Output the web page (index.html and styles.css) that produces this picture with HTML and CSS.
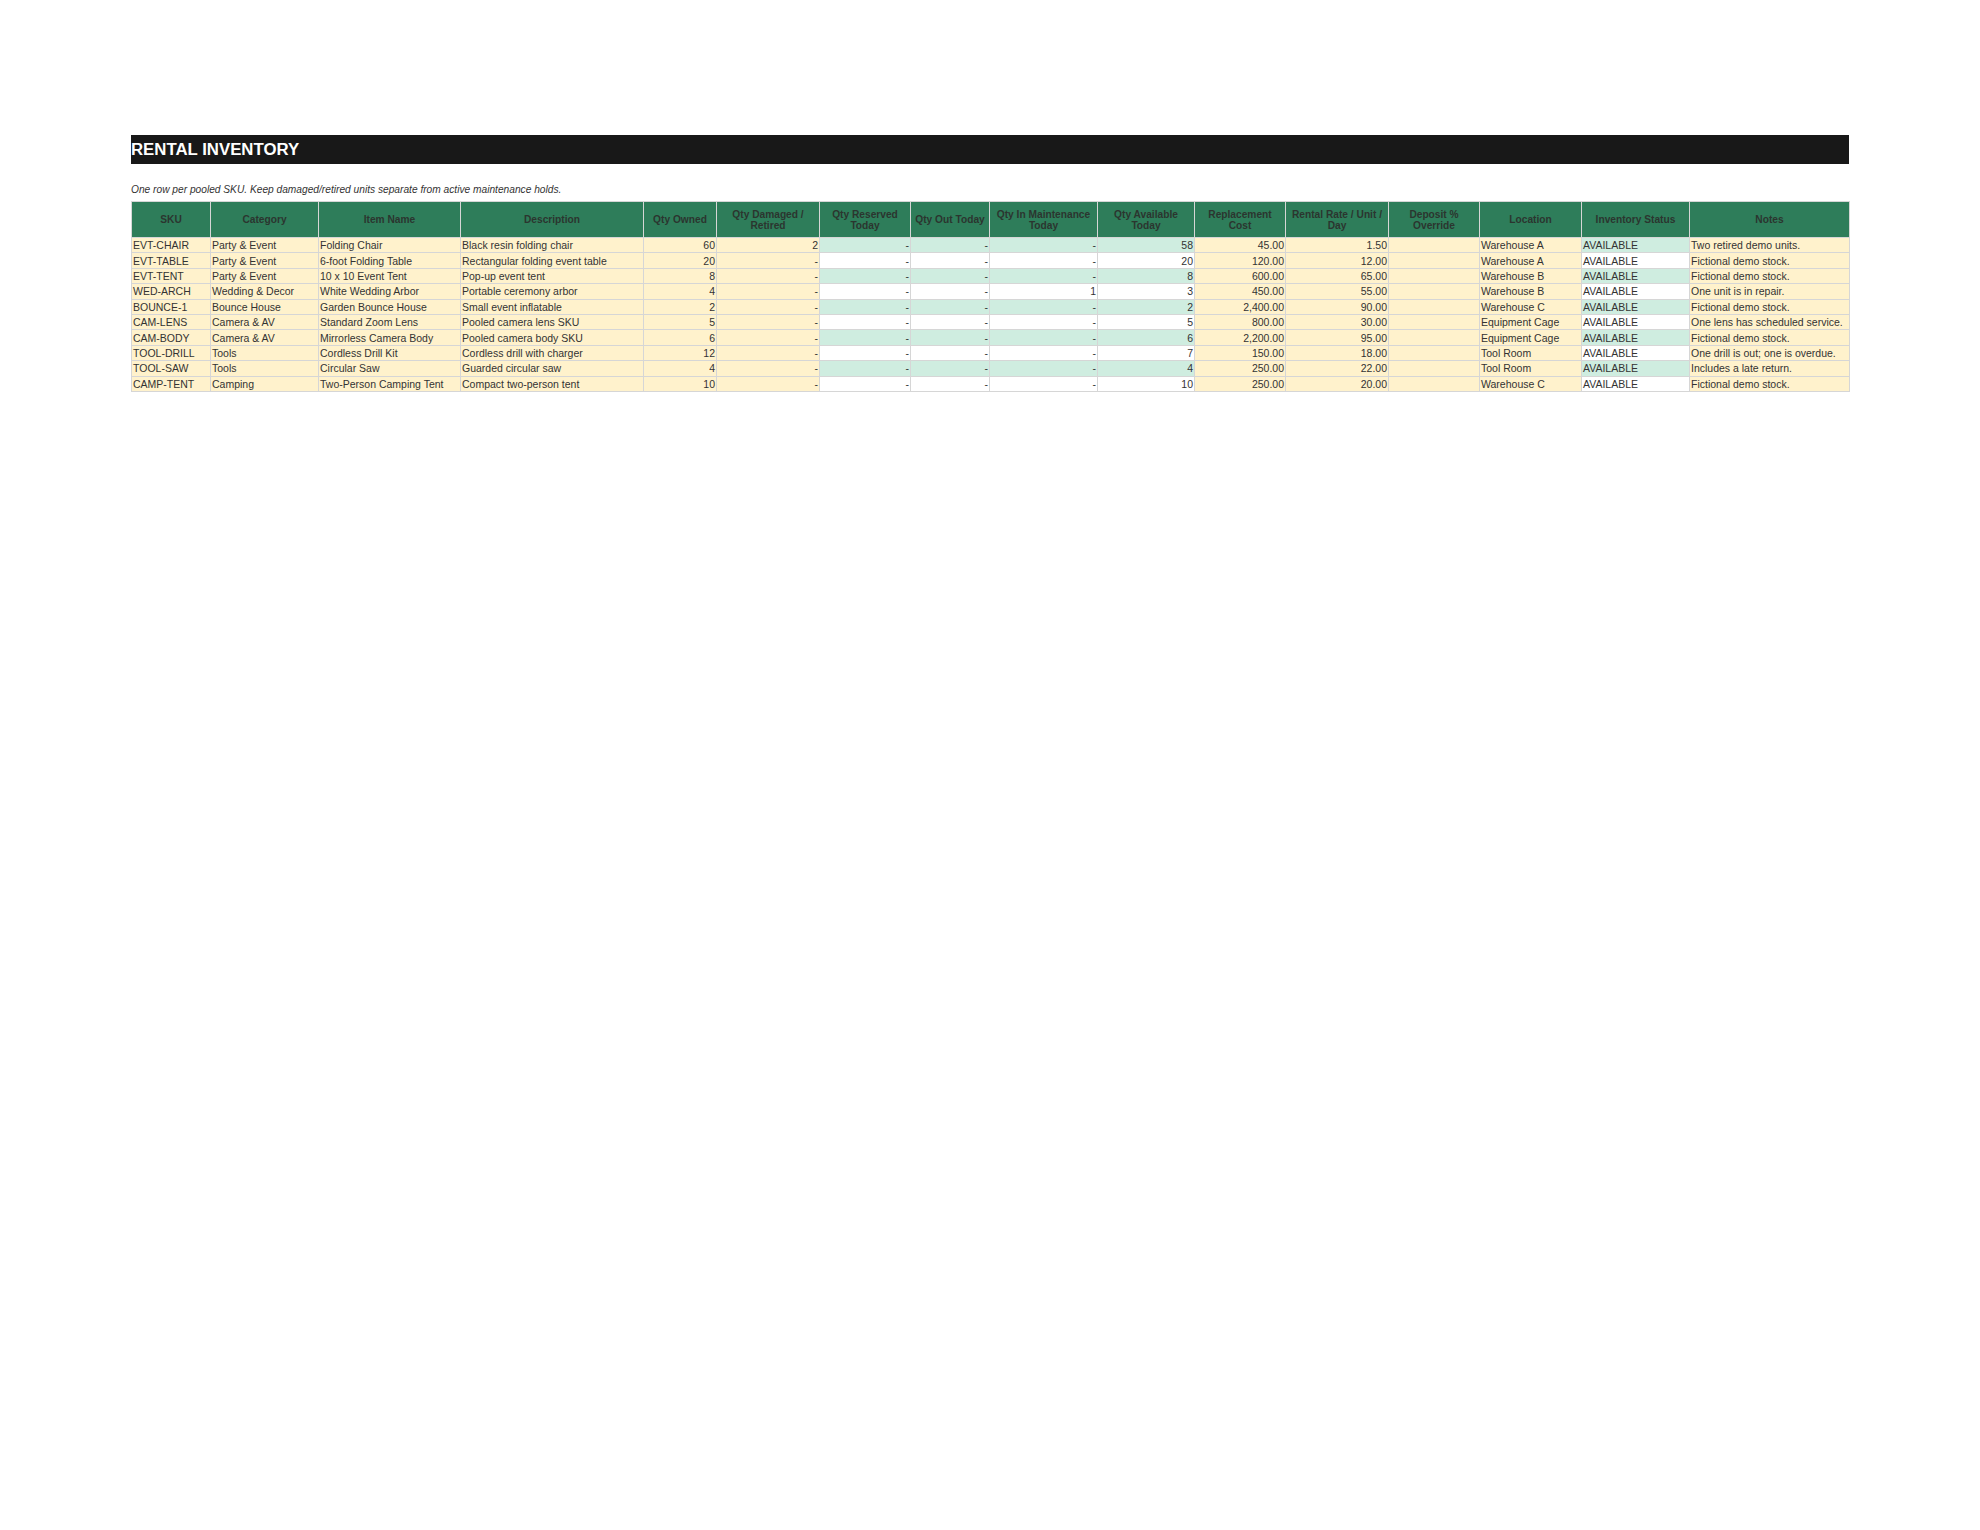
FILE: index.html
```html
<!DOCTYPE html>
<html>
<head>
<meta charset="utf-8">
<link rel="stylesheet" href="styles.css">
</head>
<body>
<div class="sheet">
  <div class="title">RENTAL INVENTORY</div>
  <div class="subtitle">One row per pooled SKU. Keep damaged/retired units separate from active maintenance holds.</div>
  <table class="inv">
    <colgroup>
      <col style="width:79px"><col style="width:108px"><col style="width:142px"><col style="width:183px">
      <col style="width:73px"><col style="width:103px"><col style="width:91px"><col style="width:79px">
      <col style="width:108px"><col style="width:97px"><col style="width:91px"><col style="width:103px">
      <col style="width:91px"><col style="width:102px"><col style="width:108px"><col style="width:160px">
    </colgroup>
    <thead>
      <tr>
        <th>SKU</th><th>Category</th><th>Item Name</th><th>Description</th><th>Qty Owned</th>
        <th>Qty Damaged /<br>Retired</th><th>Qty Reserved<br>Today</th><th>Qty Out Today</th>
        <th>Qty In Maintenance<br>Today</th><th>Qty Available<br>Today</th><th>Replacement<br>Cost</th>
        <th>Rental Rate / Unit /<br>Day</th><th>Deposit %<br>Override</th><th>Location</th>
        <th>Inventory Status</th><th>Notes</th>
      </tr>
    </thead>
    <tbody>
      <tr class="odd"><td class="in">EVT-CHAIR</td><td class="in">Party &amp; Event</td><td class="in">Folding Chair</td><td class="in">Black resin folding chair</td><td class="in num">60</td><td class="in num">2</td><td class="calc num">-</td><td class="calc num">-</td><td class="calc num">-</td><td class="calc num">58</td><td class="in num">45.00</td><td class="in num">1.50</td><td class="in"></td><td class="in">Warehouse A</td><td class="calc">AVAILABLE</td><td class="in">Two retired demo units.</td></tr>
      <tr class="even"><td class="in">EVT-TABLE</td><td class="in">Party &amp; Event</td><td class="in">6-foot Folding Table</td><td class="in">Rectangular folding event table</td><td class="in num">20</td><td class="in num">-</td><td class="calc num">-</td><td class="calc num">-</td><td class="calc num">-</td><td class="calc num">20</td><td class="in num">120.00</td><td class="in num">12.00</td><td class="in"></td><td class="in">Warehouse A</td><td class="calc">AVAILABLE</td><td class="in">Fictional demo stock.</td></tr>
      <tr class="odd"><td class="in">EVT-TENT</td><td class="in">Party &amp; Event</td><td class="in">10 x 10 Event Tent</td><td class="in">Pop-up event tent</td><td class="in num">8</td><td class="in num">-</td><td class="calc num">-</td><td class="calc num">-</td><td class="calc num">-</td><td class="calc num">8</td><td class="in num">600.00</td><td class="in num">65.00</td><td class="in"></td><td class="in">Warehouse B</td><td class="calc">AVAILABLE</td><td class="in">Fictional demo stock.</td></tr>
      <tr class="even"><td class="in">WED-ARCH</td><td class="in">Wedding &amp; Decor</td><td class="in">White Wedding Arbor</td><td class="in">Portable ceremony arbor</td><td class="in num">4</td><td class="in num">-</td><td class="calc num">-</td><td class="calc num">-</td><td class="calc num">1</td><td class="calc num">3</td><td class="in num">450.00</td><td class="in num">55.00</td><td class="in"></td><td class="in">Warehouse B</td><td class="calc">AVAILABLE</td><td class="in">One unit is in repair.</td></tr>
      <tr class="odd"><td class="in">BOUNCE-1</td><td class="in">Bounce House</td><td class="in">Garden Bounce House</td><td class="in">Small event inflatable</td><td class="in num">2</td><td class="in num">-</td><td class="calc num">-</td><td class="calc num">-</td><td class="calc num">-</td><td class="calc num">2</td><td class="in num">2,400.00</td><td class="in num">90.00</td><td class="in"></td><td class="in">Warehouse C</td><td class="calc">AVAILABLE</td><td class="in">Fictional demo stock.</td></tr>
      <tr class="even"><td class="in">CAM-LENS</td><td class="in">Camera &amp; AV</td><td class="in">Standard Zoom Lens</td><td class="in">Pooled camera lens SKU</td><td class="in num">5</td><td class="in num">-</td><td class="calc num">-</td><td class="calc num">-</td><td class="calc num">-</td><td class="calc num">5</td><td class="in num">800.00</td><td class="in num">30.00</td><td class="in"></td><td class="in">Equipment Cage</td><td class="calc">AVAILABLE</td><td class="in">One lens has scheduled service.</td></tr>
      <tr class="odd"><td class="in">CAM-BODY</td><td class="in">Camera &amp; AV</td><td class="in">Mirrorless Camera Body</td><td class="in">Pooled camera body SKU</td><td class="in num">6</td><td class="in num">-</td><td class="calc num">-</td><td class="calc num">-</td><td class="calc num">-</td><td class="calc num">6</td><td class="in num">2,200.00</td><td class="in num">95.00</td><td class="in"></td><td class="in">Equipment Cage</td><td class="calc">AVAILABLE</td><td class="in">Fictional demo stock.</td></tr>
      <tr class="even"><td class="in">TOOL-DRILL</td><td class="in">Tools</td><td class="in">Cordless Drill Kit</td><td class="in">Cordless drill with charger</td><td class="in num">12</td><td class="in num">-</td><td class="calc num">-</td><td class="calc num">-</td><td class="calc num">-</td><td class="calc num">7</td><td class="in num">150.00</td><td class="in num">18.00</td><td class="in"></td><td class="in">Tool Room</td><td class="calc">AVAILABLE</td><td class="in">One drill is out; one is overdue.</td></tr>
      <tr class="odd"><td class="in">TOOL-SAW</td><td class="in">Tools</td><td class="in">Circular Saw</td><td class="in">Guarded circular saw</td><td class="in num">4</td><td class="in num">-</td><td class="calc num">-</td><td class="calc num">-</td><td class="calc num">-</td><td class="calc num">4</td><td class="in num">250.00</td><td class="in num">22.00</td><td class="in"></td><td class="in">Tool Room</td><td class="calc">AVAILABLE</td><td class="in">Includes a late return.</td></tr>
      <tr class="even"><td class="in">CAMP-TENT</td><td class="in">Camping</td><td class="in">Two-Person Camping Tent</td><td class="in">Compact two-person tent</td><td class="in num">10</td><td class="in num">-</td><td class="calc num">-</td><td class="calc num">-</td><td class="calc num">-</td><td class="calc num">10</td><td class="in num">250.00</td><td class="in num">20.00</td><td class="in"></td><td class="in">Warehouse C</td><td class="calc">AVAILABLE</td><td class="in">Fictional demo stock.</td></tr>
    </tbody>
  </table>
</div>
</body>
</html>
```

FILE: styles.css
```css
html, body {
  margin: 0;
  padding: 0;
  background: #ffffff;
}

body {
  font-family: "Liberation Sans", Arial, sans-serif;
  color: #333333;
}

.sheet {
  margin: 135px 0 0 131px;
  width: 1718px;
}

.title {
  background: #181818;
  color: #ffffff;
  font-weight: bold;
  font-size: 16.8px;
  height: 29px;
  line-height: 29px;
  padding: 0;
}

.subtitle {
  font-style: italic;
  font-size: 10.2px;
  height: 14px;
  line-height: 14px;
  margin-top: 19px;
  margin-bottom: 4px;
  color: #333333;
}

.inv {
  border-collapse: collapse;
  table-layout: fixed;
  width: 1718px;
}

.inv th {
  background: #2e7d5a;
  color: #2b352f;
  font-weight: bold;
  font-size: 10.2px;
  line-height: 11px;
  height: 35px;
  padding: 0 1px;
  text-align: center;
  vertical-align: middle;
  border: 1px solid #d6d6d6;
  white-space: nowrap;
}

.inv td {
  font-size: 10.5px;
  height: 14.4px;
  line-height: 14px;
  padding: 0 1px;
  border: 1px solid #d6d6d6;
  white-space: nowrap;
  overflow: hidden;
  vertical-align: middle;
  text-align: left;
}

.inv td.num {
  text-align: right;
}

.inv td.in {
  background: #fff2cc;
}

.inv tr.odd td.calc {
  background: #cfede0;
}

.inv tr.even td.calc {
  background: #ffffff;
}
```
